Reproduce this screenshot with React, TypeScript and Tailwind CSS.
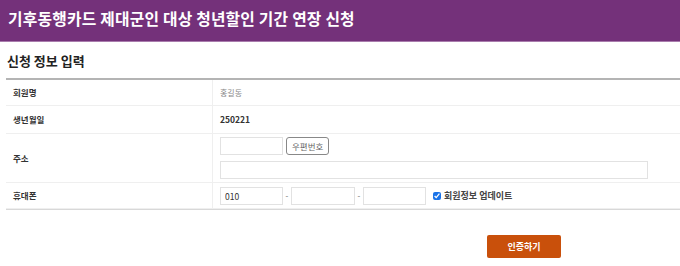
import { useState } from 'react';

const font = { fontFamily: '"Noto Sans CJK KR", "Noto Sans", sans-serif' };

function Row({ label, children, h }: { label: string; children: React.ReactNode; h: string }) {
  return (
    <div className={`flex border-b border-[#efefef] ${h}`}>
      <div className="w-[207px] shrink-0 flex items-center pl-[7px] text-[8.5px] font-bold text-[#333] border-r border-[#efefef]">
        {label}
      </div>
      <div className="flex-1 flex flex-col justify-center pl-[7px]">{children}</div>
    </div>
  );
}

export default function App() {
  const [update, setUpdate] = useState(true);
  const input = 'h-[18px] border border-[#e2e2e2] bg-white px-[4px] text-[8.5px] text-[#333] outline-none';

  return (
    <div className="w-[680px] h-[266px] bg-white overflow-hidden" style={font}>
      <header className="h-[42px] bg-[#74317a] border-b border-[#a97cad] flex items-center pl-[8px]">
        <h1 className="text-white text-[15.8px] font-bold tracking-[0.2px] -mt-[4px]">
          기후동행카드 제대군인 대상 청년할인 기간 연장 신청
        </h1>
      </header>

      <h2 className="mt-[10px] pl-[7px] text-[13px] font-bold text-[#222] leading-[18px]">신청 정보 입력</h2>

      <div className="ml-[6px] mt-[8px] border-t-2 border-[#b4b4b4]">
        <Row label="회원명" h="h-[26px]">
          <span className="text-[8px] text-[#888]">홍길동</span>
        </Row>
        <Row label="생년월일" h="h-[28px]">
          <span className="text-[8.5px] font-bold text-[#333]">250221</span>
        </Row>
        <Row label="주소" h="h-[49px]">
          <div className="flex items-center gap-[3px]">
            <input className={`${input} w-[63px]`} />
            <button className="h-[18px] px-[5px] border border-[#888] rounded-[3px] bg-white text-[8.5px] text-[#666]">
              우편번호
            </button>
          </div>
          <input className={`${input} w-[428px] mt-[6px]`} />
        </Row>
        <Row label="휴대폰" h="h-[26px]">
          <div className="flex items-center">
            <input className={`${input} w-[63px]`} defaultValue="010" />
            <span className="w-[8px] text-center text-[8px] text-[#666]">-</span>
            <input className={`${input} w-[64px]`} />
            <span className="w-[8px] text-center text-[8px] text-[#666]">-</span>
            <input className={`${input} w-[63px]`} />
            <label className="ml-[7px] flex items-center gap-[3px] text-[9px] font-bold text-[#444]">
              <input
                type="checkbox"
                checked={update}
                onChange={() => setUpdate(!update)}
                className="w-[8px] h-[8px] accent-[#1a73e8]"
              />
              회원정보 업데이트
            </label>
          </div>
        </Row>
        <div className="border-t border-[#d8d8d8] h-0" />
      </div>

      <div className="flex pl-[487px] mt-[25px]">
        <button className="w-[74px] h-[23px] rounded-[2px] bg-[#c9500b] text-white text-[9px] font-bold">
          인증하기
        </button>
      </div>
    </div>
  );
}
